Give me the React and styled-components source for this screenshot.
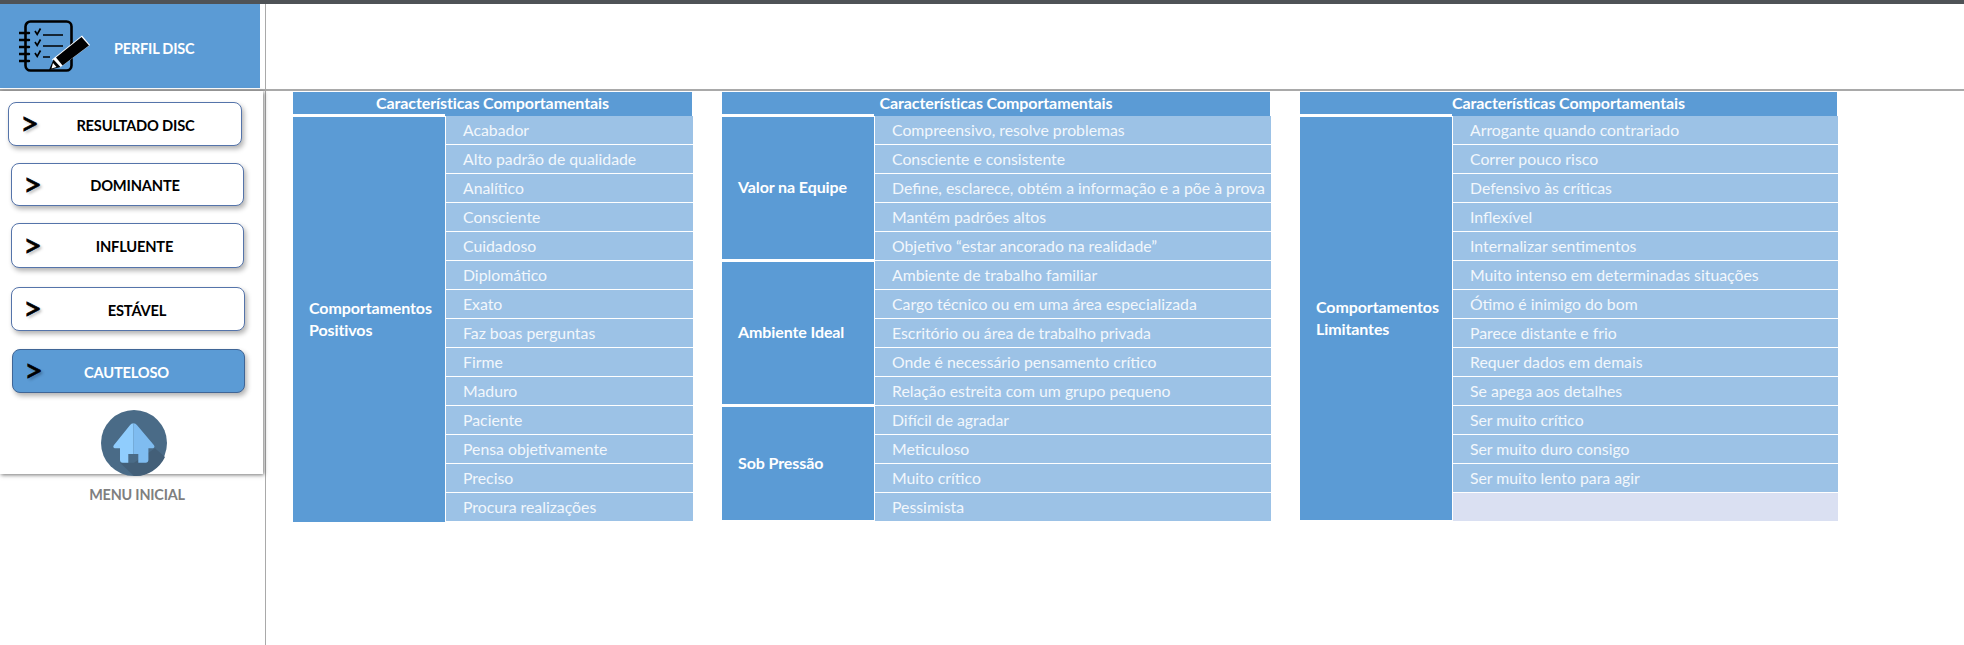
import React from "react";
import styled, { createGlobalStyle } from "styled-components";

const Global = createGlobalStyle`
  html, body { margin: 0; padding: 0; background: #fff; }
  body { font-family: "Lato", "Liberation Sans", sans-serif; }
`;

const BLUE = "#5b9bd5";
const LIGHT = "#9cc2e6";

const menu = [
  { label: "RESULTADO DISC", top: 11, left: 8, width: 234, height: 44, nudge: 25 },
  { label: "DOMINANTE", top: 17, left: 11, width: 233, height: 43, nudge: 19 },
  { label: "INFLUENTE", top: 17, left: 11, width: 233, height: 45, nudge: 18 },
  { label: "ESTÁVEL", top: 19, left: 11, width: 234, height: 44, nudge: 22 },
  { label: "CAUTELOSO", top: 18, left: 12, width: 233, height: 44, nudge: 0, active: true },
];

const tables = [
  {
    width: 400,
    groups: [
      {
        title: ["Comportamentos", "Positivos"],
        endGap: 0,
        items: ["Acabador", "Alto padrão de qualidade", "Analítico", "Consciente", "Cuidadoso", "Diplomático", "Exato", "Faz boas perguntas", "Firme", "Maduro", "Paciente", "Pensa objetivamente", "Preciso", "Procura realizações"],
      },
    ],
  },
  {
    width: 549,
    groups: [
      {
        title: ["Valor na Equipe"],
        endGap: 2,
        items: ["Compreensivo, resolve problemas", "Consciente e consistente", "Define, esclarece, obtém a informação e a põe à prova", "Mantém padrões altos", "Objetivo “estar ancorado na realidade”"],
      },
      {
        title: ["Ambiente Ideal"],
        endGap: 2,
        items: ["Ambiente de trabalho familiar", "Cargo técnico ou em uma área especializada", "Escritório ou área de trabalho privada", "Onde é necessário pensamento crítico", "Relação estreita com um grupo pequeno"],
      },
      {
        title: ["Sob Pressão"],
        endGap: 2,
        items: ["Difícil de agradar", "Meticuloso", "Muito crítico", "Pessimista"],
      },
    ],
  },
  {
    width: 538,
    groups: [
      {
        title: ["Comportamentos", "Limitantes"],
        endGap: 2,
        items: ["Arrogante quando contrariado", "Correr pouco risco", "Defensivo às críticas", "Inflexível", "Internalizar sentimentos", "Muito intenso em determinadas situações", "Ótimo é inimigo do bom", "Parece distante e frio", "Requer dados em demais", "Se apega aos detalhes", "Ser muito crítico", "Ser muito duro consigo", "Ser muito lento para agir", ""],
      },
    ],
  },
];

const Page = styled.div`
  width: 1964px;
  height: 645px;
  overflow: hidden;
  display: flex;
  flex-direction: column;
  background: #fff;
`;

const TopStrip = styled.div`
  height: 4px;
  background: #4f5357;
`;

const Header = styled.header`
  display: flex;
  height: 87px;
  border-bottom: 2px solid #a9a9a9;
  box-sizing: border-box;
`;

const Brand = styled.div`
  width: 260px;
  height: 84px;
  background: ${BLUE};
  display: flex;
  align-items: center;
  padding-left: 19px;
  box-sizing: border-box;
  gap: 24px;
`;

const BrandTitle = styled.span`
  color: #fff;
  font-size: 14.5px;
  font-weight: 700;
  letter-spacing: -0.2px;
  padding-top: 5px;
`;

const HeaderBlank = styled.div`
  margin-left: 5px;
  flex: 1;
  border-left: 1px solid #a9a9a9;
`;

const Body = styled.div`
  flex: 1;
  display: flex;
`;

const Sidebar = styled.aside`
  width: 266px;
  box-sizing: border-box;
  border-right: 1px solid #a9a9a9;
  flex-shrink: 0;
`;

const MenuPanel = styled.nav`
  width: 263px;
  height: 383px;
  box-sizing: border-box;
  background: #fff;
  box-shadow: 1px 1px 4px rgba(0, 0, 0, 0.55);
  display: flex;
  flex-direction: column;
`;

const MenuButton = styled.div`
  display: flex;
  align-items: center;
  box-sizing: border-box;
  flex-shrink: 0;
  margin-top: ${(p) => p.$top}px;
  margin-left: ${(p) => p.$left}px;
  width: ${(p) => p.$width}px;
  height: ${(p) => p.$height}px;
  padding-left: 11px;
  border: 1.5px solid ${(p) => (p.$active ? "#3f6596" : "#5574aa")};
  border-radius: 8px;
  background: ${(p) => (p.$active ? BLUE : "#fff")};
  box-shadow: 2px 3px 5px rgba(0, 0, 0, 0.3);
`;

const Chevron = styled.span`
  font-size: 33px;
  font-weight: 400;
  line-height: 1;
  width: 17px;
  margin-top: -3px;
  color: #000;
  -webkit-text-stroke: 0.6px #000;
  text-shadow: 2px 2px 3px rgba(0, 0, 0, 0.3);
`;

const MenuLabel = styled.span`
  flex: 1;
  text-align: center;
  font-size: 14.7px;
  font-weight: 700;
  letter-spacing: -0.2px;
  color: ${(p) => (p.$active ? "#fff" : "#000")};
  padding-left: ${(p) => p.$nudge}px;
  padding-right: 32px;
  margin-top: 1px;
`;

const HomeIcon = styled.svg`
  display: block;
  flex-shrink: 0;
  margin: 17px 0 0 101px;
`;

const HomeCaption = styled.div`
  margin: 12px 0 0 0;
  width: 274px;
  text-align: center;
  font-size: 14.4px;
  font-weight: 700;
  letter-spacing: -0.2px;
  color: #7f7f7f;
`;

const Main = styled.main`
  display: flex;
  align-items: flex-start;
  gap: 29px;
  padding: 1px 0 0 27px;
`;

const Table = styled.section`
  width: ${(p) => p.$width}px;
`;

const TableHead = styled.div`
  height: 24px;
  margin-right: 1px;
  background: ${BLUE};
  color: #fff;
  font-size: 16px;
  font-weight: 700;
  letter-spacing: -0.1px;
  line-height: 22px;
  text-align: center;
`;

const Group = styled.div`
  display: grid;
  grid-template-columns: 152px 1fr;
  column-gap: 1px;
`;

const GroupTitle = styled.div`
  display: flex;
  flex-direction: column;
  justify-content: center;
  margin: 1px 0 ${(p) => p.$endGap}px;
  padding: 0 0 2px 16px;
  background: ${BLUE};
  box-shadow: 0 -3px 0 #fff;
  color: #fff;
  font-size: 16px;
  font-weight: 700;
  letter-spacing: -0.1px;
  line-height: 22px;
`;

const Rows = styled.ul`
  list-style: none;
  margin: 0;
  padding: 0;
`;

const Row = styled.li`
  height: 29px;
  box-sizing: border-box;
  border-bottom: 1px solid #fff;
  padding-left: 17px;
  background: ${(p) => (p.$empty ? "#dae0f2" : LIGHT)};
  color: #f2f7fc;
  font-size: 15.8px;
  line-height: 27px;
  white-space: nowrap;
  overflow: hidden;
`;

const NotebookIcon = () => (
  <svg width="71" height="53" viewBox="0 0 71 53" aria-hidden="true">
    <rect x="6.5" y="1.5" width="46" height="49" rx="5" fill="none" stroke="#000" strokeWidth="2.6" />
    <g stroke="#000" strokeWidth="2.4" strokeLinecap="round">
      <path d="M0.5 13H10M0.5 20H10M0.5 27H10M0.5 34H10M0.5 41H10" />
    </g>
    <g fill="none" stroke="#000" strokeWidth="1.7">
      <path d="M16 11l2.2 3.4L21.5 8.5" />
      <path d="M16 22l2.2 3.4L21.5 19.5" />
      <path d="M16 33l2.2 3.4L21.5 30.5" />
      <path d="M24 15H44M24 26H44M24 37H31" />
    </g>
    <path d="M33 39.5L63 15.5L71 25L41 47.5Z" fill="#fff" />
    <path d="M37 37.5L62.5 17L70 25.5L43.5 45.5Z" fill="#000" />
    <path d="M34.5 39.5L41.5 47L30 50Z" fill="#000" />
    <path d="M34 43L37.5 47L32.5 48.5Z" fill="#fff" />
  </svg>
);

const HomeBadge = () => (
  <HomeIcon width="66" height="66" viewBox="0 0 66 66" aria-hidden="true">
    <circle cx="33" cy="33" r="33" fill="#4a6b87" />
    <path d="M19 52.7L33 52.7L54 38.3L64 47A33 33 0 0 1 33 66Z" fill="#435f78" />
    <path d="M32.5 13.3c-1.5 0-2.6.8-3.6 2L13 35c-1.4 1.8-.4 3.3 1.4 3.3H19V50c0 1.6 1.1 2.7 2.7 2.7h5.6V44h5.2Z" fill="#90cdfd" />
    <path d="M32.5 13.3c1.5 0 2.6.8 3.6 2L52.8 35c1.4 1.8.4 3.3-1.4 3.3h-4V50c0 1.6-1.1 2.7-2.7 2.7h-7.4V44h-4.8Z" fill="#7fbcf0" />
  </HomeIcon>
);

export default function App() {
  return (
    <Page>
      <Global />
      <TopStrip />
      <Header>
        <Brand>
          <NotebookIcon />
          <BrandTitle>PERFIL DISC</BrandTitle>
        </Brand>
        <HeaderBlank />
      </Header>
      <Body>
        <Sidebar>
          <MenuPanel>
            {menu.map((m) => (
              <MenuButton key={m.label} $top={m.top} $left={m.left} $width={m.width} $height={m.height} $active={m.active}>
                <Chevron>&gt;</Chevron>
                <MenuLabel $active={m.active} $nudge={m.nudge}>{m.label}</MenuLabel>
              </MenuButton>
            ))}
            <HomeBadge />
          </MenuPanel>
          <HomeCaption>MENU INICIAL</HomeCaption>
        </Sidebar>
        <Main>
          {tables.map((t, i) => (
            <Table key={i} $width={t.width}>
              <TableHead>Características Comportamentais</TableHead>
              {t.groups.map((g) => (
                <Group key={g.title[0]}>
                  <GroupTitle $endGap={g.endGap}>
                    {g.title.map((line) => (
                      <span key={line}>{line}</span>
                    ))}
                  </GroupTitle>
                  <Rows>
                    {g.items.map((item, n) => (
                      <Row key={n} $empty={!item}>{item}</Row>
                    ))}
                  </Rows>
                </Group>
              ))}
            </Table>
          ))}
        </Main>
      </Body>
    </Page>
  );
}
